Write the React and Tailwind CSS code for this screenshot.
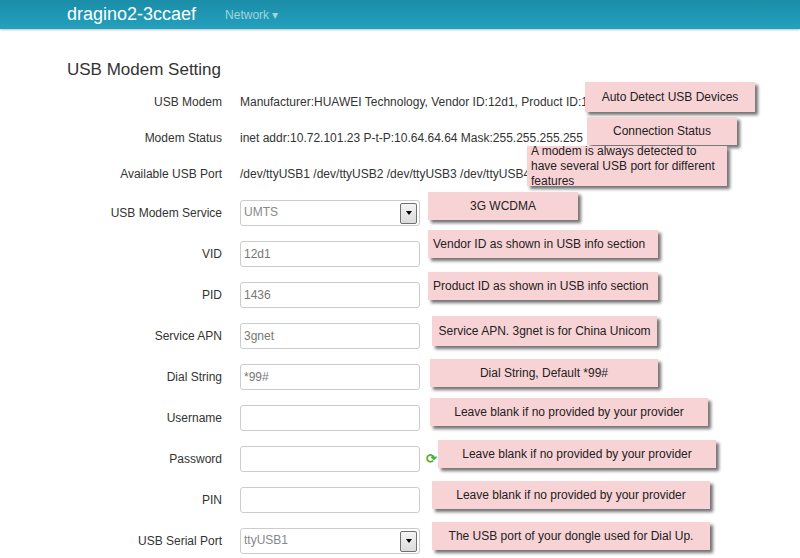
const rows = [
  { label: 'USB Modem', text: 'Manufacturer:HUAWEI Technology, Vendor ID:12d1, Product ID:1436', h: 'h-[37px]' },
  { label: 'Modem Status', text: 'inet addr:10.72.101.23 P-t-P:10.64.64.64 Mask:255.255.255.255', h: 'h-[36px]' },
  { label: 'Available USB Port', text: '/dev/ttyUSB1 /dev/ttyUSB2 /dev/ttyUSB3 /dev/ttyUSB4', h: 'h-[36px]' },
  { label: 'USB Modem Service', select: 'UMTS' },
  { label: 'VID', input: '12d1' },
  { label: 'PID', input: '1436' },
  { label: 'Service APN', input: '3gnet' },
  { label: 'Dial String', input: '*99#' },
  { label: 'Username', input: '' },
  { label: 'Password', input: '', refresh: true },
  { label: 'PIN', input: '' },
  { label: 'USB Serial Port', select: 'ttyUSB1' },
]

const notes = [
  { t: 'Auto Detect USB Devices', c: 'left-[585px] top-[82px] w-[170px] h-[30px] justify-center' },
  { t: 'Connection Status', c: 'left-[587px] top-[117px] w-[150px] h-[28px] justify-center' },
  { t: 'A modem is always detected to have several USB port for different features', c: 'left-[527px] top-[146px] w-[200px] h-[40px] px-[4px]' },
  { t: '3G WCDMA', c: 'left-[428px] top-[192px] w-[150px] h-[28px] justify-center' },
  { t: 'Vendor ID as shown in USB info section', c: 'left-[428px] top-[230px] w-[230px] h-[28px] px-[5px]' },
  { t: 'Product ID as shown in USB info section', c: 'left-[428px] top-[272px] w-[230px] h-[28px] px-[5px]' },
  { t: 'Service APN. 3gnet is for China Unicom', c: 'left-[432px] top-[316px] w-[225px] h-[30px] justify-center' },
  { t: 'Dial String, Default *99#', c: 'left-[430px] top-[359px] w-[228px] h-[28px] justify-center' },
  { t: 'Leave blank if no provided by your provider', c: 'left-[430px] top-[398px] w-[278px] h-[28px] justify-center' },
  { t: 'Leave blank if no provided by your provider', c: 'left-[438px] top-[440px] w-[278px] h-[28px] justify-center' },
  { t: 'Leave blank if no provided by your provider', c: 'left-[432px] top-[481px] w-[278px] h-[28px] justify-center' },
  { t: 'The USB port of your dongle used for Dial Up.', c: 'left-[432px] top-[522px] w-[278px] h-[28px] justify-center' },
]

function Arrow() {
  return (
    <div className="w-[17px] h-[21px] border border-[#707070] rounded-[2px] bg-gradient-to-b from-[#f4f4f4] to-[#dcdcdc] flex items-center justify-center">
      <div className="w-0 h-0 border-l-[3.5px] border-r-[3.5px] border-t-[4px] border-l-transparent border-r-transparent border-t-black" />
    </div>
  )
}

export default function App() {
  return (
    <div className="relative w-[800px] h-[558px] overflow-hidden bg-white text-[#333]" style={{ fontFamily: '"Liberation Sans", Arial, sans-serif' }}>
      <div className="h-[29px] bg-gradient-to-b from-[#1b8da8] to-[#23a1bd] flex items-end pl-[67px] pb-[6px] shadow-[0_1px_2px_rgba(0,0,0,0.25)]">
        <span className="text-white text-[18px] leading-none">dragino2-3ccaef</span>
        <span className="ml-[29px] text-[12px] text-[#a5d3de] leading-none mb-[2px]">Network ▾</span>
      </div>
      <h2 className="ml-[67px] mt-[31px] text-[17px] leading-[20px] text-[#333]">USB Modem Setting</h2>
      <div className="mt-[3px] flex flex-col">
        {rows.map((r) => (
          <div key={r.label} className={`flex items-center text-[12px] ${r.h || 'h-[41px]'}`}>
            <div className="w-[222px] text-right text-[#333]">{r.label}</div>
            <div className="ml-[18px] flex items-center">
              {r.text && <span className="text-[#333]">{r.text}</span>}
              {r.select && (
                <div className="w-[180px] h-[26px] border border-[#ccc] rounded-[3px] flex items-start justify-between pl-[3px] pr-[2px] pt-[2px] text-[#888]">
                  <span>{r.select}</span>
                  <Arrow />
                </div>
              )}
              {r.input !== undefined && (
                <div className="w-[180px] h-[26px] border border-[#ccc] rounded-[3px] flex items-center px-[3px] text-[#777]">{r.input}</div>
              )}
              {r.refresh && <span className="ml-[6px] text-[#4caf2e] text-[13px] font-bold">⟳</span>}
            </div>
          </div>
        ))}
      </div>
      {notes.map((n, i) => (
        <div key={i} className={`absolute flex items-center bg-[#f8d3d6] text-[12px] leading-[15px] text-[#222] shadow-[3px_3px_3px_rgba(0,0,0,0.55)] ${n.c}`}>{n.t}</div>
      ))}
    </div>
  )
}
